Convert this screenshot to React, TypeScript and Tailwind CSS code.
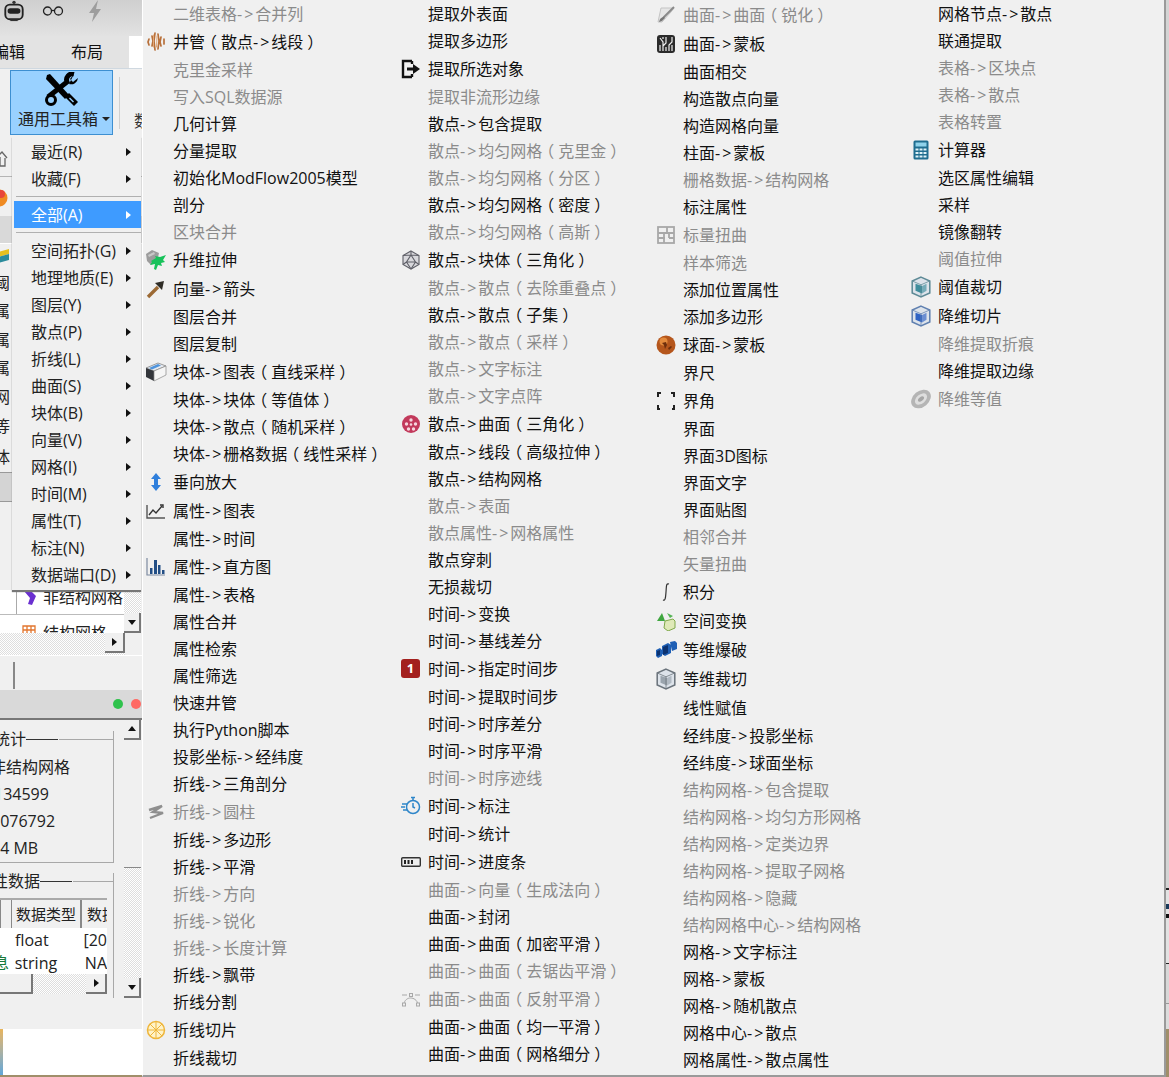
import React from 'react';

type Entry = { text: string; off?: boolean; tall?: boolean; icon?: React.ReactNode };

const FONT = "font-['Open_Sans','Noto_Sans_CJK_SC',sans-serif]";

// Menu icons
const WellIcon = () => (
  <svg width="20" height="22" viewBox="0 0 20 22" fill="none" strokeLinecap="round">
    <path d="M3 8l-1 3 1 3M6 5l1 5-1 5M9 2l-1 8 1 9M12 3l1 7-1 8M15 6l-1 5 1 4M18 8v5" stroke="#b8703a" strokeWidth="1.700" />
    <path d="M7.500 4v12M11 5l-.5 11" stroke="#e3a878" strokeWidth="1" />
  </svg>
);
const TreeIcon = () => (
  <svg width="22" height="22" viewBox="0 0 22 22">
    <path d="M1 5l6-4 7 3-2 9-6 3-4-4z" fill="#9c9c9c" />
    <path d="M3 6l6-3 1 2-6 3z" fill="#c8c8c8" />
    <path d="M6 12l5-3-1-2 5 1 6-2-3 5 2 2-4 1 1 3-4-1-2 5-2-1 1-5-5 1 2-3z" fill="#17c25a" />
  </svg>
);
const ArrowIcon = () => (
  <svg width="20" height="20" viewBox="0 0 20 20" fill="none">
    <path d="M2 18L12 8" stroke="#9c6a34" strokeWidth="3.400" />
    <path d="M9 4l9-2-2 9z" fill="#2f2c26" />
  </svg>
);
const BoxIcon = () => (
  <svg width="22" height="22" viewBox="0 0 22 22">
    <path d="M1 7l12-5 8 3-12 5z" fill="#e8ebf0" stroke="#777" strokeWidth=".7" />
    <path d="M4 7l9-4 3 1.500-9 4z" fill="#4f94dc" />
    <path d="M1 7l8 3v10l-8-4z" fill="#33363b" />
    <path d="M9 10l12-5v9l-12 6z" fill="#f5f5f5" stroke="#888" strokeWidth=".7" />
  </svg>
);
const UpDownIcon = () => (
  <svg width="14" height="20" viewBox="0 0 14 20" fill="#2f7fdc">
    <path d="M7 1l5 6H9v6h3l-5 6-5-6h3V7H2z" />
  </svg>
);
const LineChartIcon = () => (
  <svg width="20" height="18" viewBox="0 0 20 18" fill="none" stroke="#333" strokeWidth="1.400">
    <path d="M1 3v13h18" stroke="#555" />
    <path d="M3 13l4-5 3 3 6-7" />
    <path d="M14 3h3v3" />
  </svg>
);
const BarsIcon = () => (
  <svg width="20" height="20" viewBox="0 0 20 20">
    <path d="M1 1v17h18" fill="none" stroke="#7d8aa0" strokeWidth="1.200" />
    <path d="M4 11h2.500v6H4zM8 3h3v14H8zM12 8h2.500v9H12zM16 13h2.500v4H16z" fill="#234f86" />
  </svg>
);
const ZigzagIcon = () => (
  <svg width="20" height="18" viewBox="0 0 20 18" fill="none" stroke="#8f8f8f" strokeWidth="2.400">
    <path d="M3 7l13-4-9 6 10 1-13 5" />
  </svg>
);
const SliceIcon = () => (
  <svg width="20" height="20" viewBox="0 0 20 20" fill="#fff3c8" stroke="#eeb53a" strokeWidth="1.500">
    <circle cx="10" cy="10" r="8.500" />
    <path d="M10 2v16M2 10h16M4 4l12 12M16 4L4 16" strokeWidth="1" />
  </svg>
);
const ExitIcon = () => (
  <svg width="20" height="20" viewBox="0 0 20 20" fill="none" stroke="#111" strokeWidth="2.400">
    <path d="M11 2H2v16h9M11 2v3M11 15v3" />
    <path d="M6 10h7" strokeWidth="3" />
    <path d="M12 5l7 5-7 5z" fill="#111" strokeWidth="0" />
  </svg>
);
const HedronIcon = () => (
  <svg width="20" height="20" viewBox="0 0 20 20" fill="#d8d8dc" stroke="#5f6068" strokeWidth="1.100">
    <path d="M10 1l8 4.500v9L10 19l-8-4.500v-9z" />
    <path d="M10 5l4.500 7h-9zM10 1v4M2 5.500L10 5l8 .5M2 14.500l3.500-2.500M18 14.500L14.500 12M10 19l-4.500-7M10 19l4.500-7" fill="none" />
  </svg>
);
const BallIcon = () => (
  <svg width="20" height="20" viewBox="0 0 20 20" fill="none">
    <circle cx="10" cy="10" r="9" fill="#c2395b" />
    <g fill="#f6d6de">
      <circle cx="10" cy="6" r="1.700" />
      <circle cx="5.500" cy="10" r="1.700" />
      <circle cx="14.500" cy="10" r="1.700" />
      <circle cx="7.500" cy="15" r="1.700" />
      <circle cx="12.500" cy="15" r="1.700" />
      <circle cx="10" cy="10.500" r="1.300" />
    </g>
  </svg>
);
const StepIcon = () => (
  <span className="flex h-[19px] w-[19px] items-center justify-center rounded-[3px] bg-[#a3201e] text-[13px] font-bold leading-none text-white">1</span>
);
const TimerIcon = () => (
  <svg width="20" height="20" viewBox="0 0 20 20" fill="none" stroke="#2f86c9" strokeWidth="1.500">
    <circle cx="12" cy="11" r="6.500" />
    <path d="M12 1.500v3M10 1.500h4M12 7v4l2 1" />
    <path d="M1 8h5M0 11h4M2 14h4" />
  </svg>
);
const ProgressIcon = () => (
  <svg width="20" height="10" viewBox="0 0 20 10">
    <rect x=".7" y=".7" width="18.600" height="8.600" rx="1" fill="#eee" stroke="#333" strokeWidth="1.400" />
    <path d="M3 3h2v4H3zM6.500 3h2v4h-2zM10 3h2v4h-2z" fill="#222" />
  </svg>
);
const BezierIcon = () => (
  <svg width="20" height="16" viewBox="0 0 20 16" fill="none" stroke="#a8a8a8" strokeWidth="1">
    <path d="M3 13C4 5 15 5 17 13" />
    <path d="M1 4h5M14 4h5" />
    <rect x="8.500" y="2.500" width="3" height="3" fill="#eee" />
    <rect x="1.500" y="12" width="3" height="3" fill="#eee" />
    <rect x="15.500" y="12" width="3" height="3" fill="#eee" />
  </svg>
);
const BrushIcon = () => (
  <svg width="20" height="20" viewBox="0 0 20 20" fill="none">
    <path d="M5 3h13l-3 4-9 10H2z" fill="#e6e6e6" stroke="#c4c4c4" />
    <path d="M18 2L8 12" stroke="#8a8a8a" strokeWidth="2" />
    <path d="M8 11l-4 3-1 3 3-1 3-3z" fill="#777" />
  </svg>
);
const CircuitIcon = () => (
  <svg width="20" height="20" viewBox="0 0 20 20" fill="none">
    <rect x="1" y="1" width="18" height="18" rx="3" fill="#2b2b2b" />
    <path d="M4 4l3 4v9M10 3v6l-3 3M13 17v-6l3-3V3M10 13v4M4 11v6M16 11v6M7 3v2" stroke="#eee" strokeWidth="1.200" />
  </svg>
);
const GridIcon = () => (
  <svg width="20" height="20" viewBox="0 0 20 20" fill="none" stroke="#a8a8a8" strokeWidth="1.800">
    <rect x="2" y="2" width="16" height="16" />
    <path d="M2 8h16M2 13h7M11 2v6M8 8v10M13 13h5M13 8v5" />
  </svg>
);
const GlobeIcon = () => (
  <svg width="20" height="20" viewBox="0 0 20 20">
    <circle cx="10" cy="10" r="9.500" fill="#b5561c" />
    <circle cx="7.500" cy="6.500" r="4" fill="#e48a3c" />
    <path d="M6 8l4-1 1 3-2 4-1-4zM12 13l3-2 1 1-3 3z" fill="#6e2e0c" />
  </svg>
);
const CornersIcon = () => (
  <svg width="20" height="20" viewBox="0 0 20 20" fill="none" stroke="#222" strokeWidth="2">
    <path d="M2 6V2h3M15 2h3v4M2 14v4h2M18 14v4h-2" />
  </svg>
);
const IntegralIcon = () => (
  <svg width="12" height="20" viewBox="0 0 12 20" fill="none" stroke="#333" strokeWidth="1.200">
    <path d="M9 2C6 1 6.500 4 6 10c-.4 5-.5 9-3 8" />
  </svg>
);
const TransformIcon = () => (
  <svg width="20" height="20" viewBox="0 0 20 20">
    <path d="M1 10l5-8 3 8z" fill="#3fa63f" />
    <path d="M9 10l8-2 2 2v7l-7 3-4-3z" fill="#dfe9b8" stroke="#7fa84a" />
    <path d="M11 2l6 3-3 2z" fill="#55b455" />
  </svg>
);
const BurstIcon = () => (
  <svg width="22" height="20" viewBox="0 0 22 20" fill="#1f5fb4">
    <path d="M1 10l4-2 2 2v6l-4 2-2-2zM7 6l6-3 3 2v8l-6 3-3-2zM15 2l5-1 2 2v6l-5 2z" />
    <path d="M8 7l5-2v8l-5 2zM2 11l3-1v5l-3 1z" fill="#0c3270" />
  </svg>
);
const CubeIcon = ({ face, edge }: { face: string; edge: string }) => (
  <svg width="22" height="22" viewBox="0 0 20 20" fill="none">
    <path d="M10 1l8 3.500v11L10 19l-8-3.500v-11z" fill="#dde3ea" stroke={edge} strokeWidth="1.400" />
    <path d="M5 7l6 2v7l-6-2.500z" fill={face} />
    <path d="M11 9l4-2v6.500L11 16z" fill={face} opacity=".65" />
    <path d="M2 4.500L10 8l8-3.500M10 8v11" stroke={edge} strokeWidth=".7" />
  </svg>
);
const CalcIcon = () => (
  <svg width="16" height="20" viewBox="0 0 16 20">
    <rect x=".5" y=".5" width="15" height="19" rx="1.500" fill="#1f6d8f" />
    <rect x="2.500" y="2.500" width="11" height="4" fill="#8fd2ea" />
    <path d="M2.500 8.500h3v2h-3zM6.500 8.500h3v2h-3zM10.500 8.500h3v2h-3zM2.500 12h3v2h-3zM6.500 12h3v2h-3zM10.500 12h3v2h-3zM2.500 15.500h3v2h-3zM6.500 15.500h3v2h-3zM10.500 15.500h3v2h-3z" fill="#dff2f7" />
  </svg>
);
const DiscIcon = () => (
  <svg width="22" height="22" viewBox="0 0 22 20">
    <ellipse cx="11" cy="10" rx="11" ry="8" transform="rotate(-40 11 10)" fill="#b5b5b5" />
    <ellipse cx="11" cy="10" rx="7" ry="4.500" transform="rotate(-40 11 10)" fill="#dedede" />
    <ellipse cx="11" cy="10" rx="3.500" ry="2" transform="rotate(-40 11 10)" fill="#a6a6a6" />
  </svg>
);

const col1: Entry[] = [
  { text: '二维表格->合并列', off: true },
  { text: '井管（散点->线段）', icon: <WellIcon /> },
  { text: '克里金采样', off: true },
  { text: '写入SQL数据源', off: true },
  { text: '几何计算' },
  { text: '分量提取' },
  { text: '初始化ModFlow2005模型' },
  { text: '剖分' },
  { text: '区块合并', off: true },
  { text: '升维拉伸', icon: <TreeIcon /> },
  { text: '向量->箭头', icon: <ArrowIcon /> },
  { text: '图层合并' },
  { text: '图层复制' },
  { text: '块体->图表（直线采样）', icon: <BoxIcon /> },
  { text: '块体->块体（等值体）' },
  { text: '块体->散点（随机采样）' },
  { text: '块体->栅格数据（线性采样）' },
  { text: '垂向放大', icon: <UpDownIcon /> },
  { text: '属性->图表', icon: <LineChartIcon /> },
  { text: '属性->时间' },
  { text: '属性->直方图', icon: <BarsIcon /> },
  { text: '属性->表格' },
  { text: '属性合并' },
  { text: '属性检索' },
  { text: '属性筛选' },
  { text: '快速井管' },
  { text: '执行Python脚本' },
  { text: '投影坐标->经纬度' },
  { text: '折线->三角剖分' },
  { text: '折线->圆柱', off: true, icon: <ZigzagIcon /> },
  { text: '折线->多边形' },
  { text: '折线->平滑' },
  { text: '折线->方向', off: true },
  { text: '折线->锐化', off: true },
  { text: '折线->长度计算', off: true },
  { text: '折线->飘带' },
  { text: '折线分割' },
  { text: '折线切片', icon: <SliceIcon /> },
  { text: '折线裁切' },
];

const col2: Entry[] = [
  { text: '提取外表面' },
  { text: '提取多边形' },
  { text: '提取所选对象', icon: <ExitIcon /> },
  { text: '提取非流形边缘', off: true },
  { text: '散点->包含提取' },
  { text: '散点->均匀网格（克里金）', off: true },
  { text: '散点->均匀网格（分区）', off: true },
  { text: '散点->均匀网格（密度）' },
  { text: '散点->均匀网格（高斯）', off: true },
  { text: '散点->块体（三角化）', icon: <HedronIcon /> },
  { text: '散点->散点（去除重叠点）', off: true },
  { text: '散点->散点（子集）' },
  { text: '散点->散点（采样）', off: true },
  { text: '散点->文字标注', off: true },
  { text: '散点->文字点阵', off: true },
  { text: '散点->曲面（三角化）', icon: <BallIcon /> },
  { text: '散点->线段（高级拉伸）' },
  { text: '散点->结构网格' },
  { text: '散点->表面', off: true },
  { text: '散点属性->网格属性', off: true },
  { text: '散点穿刺' },
  { text: '无损裁切' },
  { text: '时间->变换' },
  { text: '时间->基线差分' },
  { text: '时间->指定时间步', icon: <StepIcon /> },
  { text: '时间->提取时间步' },
  { text: '时间->时序差分' },
  { text: '时间->时序平滑' },
  { text: '时间->时序迹线', off: true },
  { text: '时间->标注', icon: <TimerIcon /> },
  { text: '时间->统计' },
  { text: '时间->进度条', icon: <ProgressIcon /> },
  { text: '曲面->向量（生成法向）', off: true },
  { text: '曲面->封闭' },
  { text: '曲面->曲面（加密平滑）' },
  { text: '曲面->曲面（去锯齿平滑）', off: true },
  { text: '曲面->曲面（反射平滑）', off: true, icon: <BezierIcon /> },
  { text: '曲面->曲面（均一平滑）' },
  { text: '曲面->曲面（网格细分）' },
];

const col3: Entry[] = [
  { text: '曲面->曲面（锐化）', off: true, icon: <BrushIcon /> },
  { text: '曲面->蒙板', icon: <CircuitIcon /> },
  { text: '曲面相交' },
  { text: '构造散点向量' },
  { text: '构造网格向量' },
  { text: '柱面->蒙板' },
  { text: '栅格数据->结构网格', off: true },
  { text: '标注属性' },
  { text: '标量扭曲', off: true, icon: <GridIcon /> },
  { text: '样本筛选', off: true },
  { text: '添加位置属性' },
  { text: '添加多边形' },
  { text: '球面->蒙板', icon: <GlobeIcon /> },
  { text: '界尺' },
  { text: '界角', icon: <CornersIcon /> },
  { text: '界面' },
  { text: '界面3D图标' },
  { text: '界面文字' },
  { text: '界面贴图' },
  { text: '相邻合并', off: true },
  { text: '矢量扭曲', off: true },
  { text: '积分', icon: <IntegralIcon /> },
  { text: '空间变换', icon: <TransformIcon /> },
  { text: '等维爆破', icon: <BurstIcon /> },
  { text: '等维裁切', icon: <CubeIcon face="#9aa4ad" edge="#6b747c" /> },
  { text: '线性赋值', tall: true },
  { text: '经纬度->投影坐标' },
  { text: '经纬度->球面坐标' },
  { text: '结构网格->包含提取', off: true },
  { text: '结构网格->均匀方形网格', off: true },
  { text: '结构网格->定类边界', off: true },
  { text: '结构网格->提取子网格', off: true },
  { text: '结构网格->隐藏', off: true },
  { text: '结构网格中心->结构网格', off: true },
  { text: '网格->文字标注' },
  { text: '网格->蒙板' },
  { text: '网格->随机散点' },
  { text: '网格中心->散点' },
  { text: '网格属性->散点属性' },
];

const col4: Entry[] = [
  { text: '网格节点->散点' },
  { text: '联通提取' },
  { text: '表格->区块点', off: true },
  { text: '表格->散点', off: true },
  { text: '表格转置', off: true },
  { text: '计算器', icon: <CalcIcon /> },
  { text: '选区属性编辑' },
  { text: '采样' },
  { text: '镜像翻转' },
  { text: '阈值拉伸', off: true },
  { text: '阈值裁切', icon: <CubeIcon face="#3f8d9c" edge="#5e8a96" /> },
  { text: '降维切片', icon: <CubeIcon face="#2f63c4" edge="#6080b0" /> },
  { text: '降维提取折痕', off: true },
  { text: '降维提取边缘' },
  { text: '降维等值', off: true, icon: <DiscIcon /> },
];

const sideItems = ['空间拓扑(G)', '地理地质(E)', '图层(Y)', '散点(P)', '折线(L)', '曲面(S)', '块体(B)', '向量(V)', '网格(I)', '时间(M)', '属性(T)', '标注(N)', '数据端口(D)'];

const Tri = ({ dir, color = '#111', size = 8 }: { dir: 'right' | 'up' | 'down'; color?: string; size?: number }) => {
  const d = dir === 'right' ? 'M2 0l5 4-5 4z' : dir === 'up' ? 'M0 6l4-5 4 5z' : 'M0 2l4 5 4-5z';
  return (
    <svg width={size} height={size} viewBox="0 0 8 8" fill={color}>
      <path d={d} />
    </svg>
  );
};

// Arrows get extra tracking, full-width brackets go half width and are padded so they sit centred
const MenuLabel = ({ text }: { text: string }) => (
  <span className="whitespace-nowrap">
    {text.split(/(->|（|）)/).map((part, i) => {
      if (part === '->') return <span key={i} className="tracking-[2px]">-&gt;</span>;
      if (part === '（' || part === '）') return <span key={i} className="px-[4px] [font-feature-settings:'halt']">{part}</span>;
      return part;
    })}
  </span>
);

const MenuColumn = ({ items }: { items: Entry[] }) => (
  <div className="flex w-[255px] flex-col">
    {items.map((item) => (
      <div key={item.text} className={`flex items-center ${item.icon || item.tall ? 'h-[29px]' : 'h-[27px]'} ${item.off ? 'text-[#8b8b8b]' : 'text-[#111]'}`}>
        <span className="flex w-[25px] justify-center">{item.icon}</span>
        <span className="ml-[5px]">
          <MenuLabel text={item.text} />
        </span>
      </div>
    ))}
  </div>
);

const SideRow = ({ label }: { label: string }) => (
  <div className="flex h-[27px] items-center justify-between pl-[19px] pr-[9px]">
    <span className="whitespace-nowrap">{label}</span>
    <Tri dir="right" />
  </div>
);

const SideMenu = () => (
  <div className="absolute left-[12px] top-[136px] h-[454px] w-[129px] bg-[#f0f0f0] pt-[2.5px] text-[16px] leading-none text-[#222] shadow-[0_2px_1px_#777]">
    {['最近(R)', '收藏(F)'].map((t) => (
      <SideRow key={t} label={t} />
    ))}
    <div className="flex h-[8.5px] items-center pl-[4px]">
      <div className="h-px flex-1 bg-[#b0b0b0]" />
    </div>
    <div className="ml-[2px] flex h-[27px] items-center justify-between bg-[#3e9bff] pl-[17px] pr-[9px] text-white">
      <span>全部(A)</span>
      <Tri dir="right" color="#fff" />
    </div>
    <div className="flex h-[9px] items-center pl-[4px]">
      <div className="h-px flex-1 bg-[#b0b0b0]" />
    </div>
    {sideItems.map((t) => (
      <SideRow key={t} label={t} />
    ))}
  </div>
);

const Raised = ({ className, children }: { className: string; children?: React.ReactNode }) => (
  <div className={`flex items-center justify-center border-b-2 border-r-2 border-b-[#777] border-r-[#777] bg-[#f0f0f0] ${className}`}>{children}</div>
);

const hatch = 'bg-[repeating-conic-gradient(#dedede_0_25%,#ffffff_0_50%)] bg-[length:2px_2px]';

const TopBar = () => (
  <div className="flex h-[36px] items-center gap-[17px] bg-gradient-to-b from-[#cfcfcf] to-[#e2e2e2] pb-[14px] pl-[3px]">
    <svg width="22" height="22" viewBox="0 0 22 24">
      <circle cx="11" cy="2.500" r="1.800" fill="#333" />
      <rect x="1.500" y="5" width="19" height="16" rx="5" fill="#c9c9c9" stroke="#222" strokeWidth="2" />
      <rect x="4" y="9" width="14" height="6" rx="3" fill="#222" />
      <rect x="7" y="21" width="8" height="2" fill="#333" />
    </svg>
    <svg width="22" height="10" viewBox="0 0 22 10" fill="none" stroke="#222" strokeWidth="1.300">
      <circle cx="5.500" cy="5" r="4" />
      <circle cx="16.500" cy="5" r="4" />
      <path d="M9.500 4.500h3" />
    </svg>
    <svg width="14" height="22" viewBox="0 0 14 22" fill="#9d9d9d" className="ml-[7px]">
      <path d="M10 0L1 13h5l-2 9 9-13H8z" />
    </svg>
  </div>
);

const Tabs = () => (
  <div className="flex h-[32px] items-center justify-between bg-[#e3e3e3] text-[16px] text-[#111]">
    <span className="-ml-[7px]">编辑</span>
    <span className="ml-[46px]">布局</span>
    <div className="ml-auto h-full w-[13px] bg-white" />
  </div>
);

const Toolbar = () => (
  <div className="flex h-[68px] items-center overflow-hidden border-t border-t-[#cfd8e0] bg-[#f0f0f0] pl-[3px]">
    <div className="h-[52px] w-px bg-[#d0d0d0]" />
    <div className="ml-[7px] flex h-[65px] w-[103px] shrink-0 flex-col items-center border border-[#3d8fd1] bg-[#99d1ff]">
      <svg width="36" height="36" viewBox="0 0 36 36" fill="none" className="mt-[1px]">
        <path d="M3 3l3-1 19 21-4 4L2 7z" fill="#000" />
        <path d="M30 2a6 6 0 0 0-7 8L4 25" stroke="#000" strokeWidth="5" />
        <path d="M30 2l-4 5 3 3 5-4a7 7 0 0 1-9 6" fill="#000" />
        <circle cx="7" cy="28" r="4.500" stroke="#000" strokeWidth="3" fill="#99d1ff" />
        <path d="M21 25l4-4 9 9-4 4z" fill="#000" />
        <path d="M25.500 26l4 4" stroke="#99d1ff" strokeWidth="1.500" />
      </svg>
      <div className="ml-[5px] mt-[3px] flex items-center gap-[4px] text-[16px] leading-none text-[#222]">
        <span className="whitespace-nowrap">通用工具箱</span>
        <svg width="8" height="5" viewBox="0 0 8 5" fill="#222"><path d="M0 0h8L4 4z" /></svg>
      </div>
    </div>
    <div className="ml-[6px] h-[52px] w-px shrink-0 bg-[#d0d0d0]" />
    <span className="ml-[14px] mt-[36px] shrink-0 text-[16px] leading-none text-[#333]">数</span>
  </div>
);

// Peeks out to the left of the open side menu
const ListBehind = () => (
  <div className="flex h-[454px] flex-col bg-[#f0f0f0] text-[16px] leading-none text-[#222]">
    <div className="flex h-[40px] items-start overflow-hidden pt-[14px]">
      <svg width="8" height="18" viewBox="0 0 8 18" fill="none" stroke="#666" strokeWidth="1.300"><path d="M-3 7l5-5 5 6M0 7v9h5V8" /></svg>
    </div>
    <div className="flex h-[40px] items-start overflow-hidden border-t border-t-[#b5b5b5] pt-[11px]">
      <svg width="8" height="20" viewBox="0 0 8 20"><circle cx="-1" cy="10" r="8.500" fill="#ef8a22" /><circle cx="1" cy="6" r="4" fill="#e8453a" /></svg>
    </div>
    <div className="h-[27px] bg-[#d9d9d9]" />
    <div className="flex h-[25px] items-center overflow-hidden border-t border-t-white">
      <svg width="10" height="16" viewBox="0 0 10 16"><path d="M-2 4l11-3v5L-2 9z" fill="#e6c020" /><path d="M-2 9l11-3v6L-2 15z" fill="#2c8c9c" /></svg>
    </div>
    {[
      ['阈', 29],
      ['属', 28],
      ['属', 29],
      ['属', 28],
      ['网', 29],
      ['等', 30],
      ['体', 31],
    ].map(([t, h], i) => (
      <div key={i} className="flex items-center overflow-hidden" style={{ height: h as number }}>
        <span className="-ml-[6px]">{t}</span>
      </div>
    ))}
    <div className="h-[30px] w-[12px] border-b border-t border-[#999] bg-[#d4d4d4]" />
  </div>
);

const TreeList = () => (
  <div className="flex h-[43px] text-[16px] leading-none text-[#222]">
    <div className="flex w-[124px] flex-col overflow-hidden bg-white">
      <div className="flex h-[25px] items-start border-b border-b-[#bbb]">
        <div className="h-full w-[17px] border-r border-r-[#aaa]" />
        <svg width="14" height="16" viewBox="0 0 14 16" className="ml-[6px]"><path d="M1 1h7l5 5-4 9-4-1 2-6z" fill="#6a2fd0" /></svg>
        <span className="-mt-[1px] ml-[6px] whitespace-nowrap">非结构网格</span>
      </div>
      <div className="flex h-[18px] items-start overflow-hidden pt-[10px]">
        <svg width="14" height="14" viewBox="0 0 14 14" fill="none" stroke="#e2762e" strokeWidth="1.300" className="ml-[22px] shrink-0"><path d="M1 1h12v12H1zM1 5h12M1 9h12M5 1v12M9 1v12" /></svg>
        <span className="ml-[7px] whitespace-nowrap">结构网格</span>
      </div>
    </div>
    <div className={`flex w-[17px] flex-col justify-end ${hatch}`}>
      <Raised className="h-[20px]"><Tri dir="down" /></Raised>
    </div>
  </div>
);

const HScroll = () => (
  <div className="flex h-[22px]">
    <div className={`flex flex-1 justify-end ${hatch}`}>
      <Raised className="h-[20px] w-[20px]"><Tri dir="right" /></Raised>
    </div>
    <div className="w-[17px] bg-[#f0f0f0]" />
  </div>
);

const StatsPanel = () => (
  <div className="flex h-[280px] bg-[#f0f0f0] text-[16px] leading-none text-[#222]">
    <div className="w-[124px] overflow-hidden pt-[11px]">
      <div className="h-[132px] w-[114px] border-b border-r border-[#a8a8a8]">
        <div className="flex h-[16px] items-center">
          <span className="-ml-[6px]">统计</span>
          <div className="h-px w-[32px] bg-[#333]" />
          <div className="ml-[1px] h-px flex-1 bg-[#a8a8a8]" />
        </div>
        {['非结构网格', '134599', '2076792', '14 MB'].map((t, i) => (
          <div key={t} className={`flex h-[27px] items-center whitespace-nowrap ${['-ml-[10px]', '-ml-[6px]', '-ml-[9px]', '-ml-[9px]'][i]} ${i === 0 ? 'mt-[6px]' : ''}`}>{t}</div>
        ))}
      </div>
      <div className="mt-[10px] h-[125px] w-[114px] border-r border-r-[#a8a8a8]">
        <div className="flex h-[16px] items-center">
          <span className="-ml-[8px] whitespace-nowrap">性数据</span>
          <div className="h-px w-[32px] bg-[#333]" />
          <div className="ml-[1px] h-px flex-1 bg-[#a8a8a8]" />
        </div>
        <div className="mt-[9px] w-[107px] overflow-hidden bg-white">
          <div className="flex h-[30px] items-center border-t-2 border-t-[#aaa] bg-[#f0f0f0]">
            <div className="h-full w-[12px] shrink-0 border-x border-x-[#888]" />
            <div className="flex h-full w-[70px] shrink-0 items-center justify-center border-r-2 border-r-[#888] text-[15px]">数据类型</div>
            <span className="ml-[5px] whitespace-nowrap text-[15px]">数据</span>
          </div>
          <div className="flex h-[23px] items-center whitespace-nowrap pl-[15px]">
            <span className="w-[71px]">float</span><span>[20</span>
          </div>
          <div className="flex h-[23px] items-center whitespace-nowrap">
            <span className="-ml-[7px] w-[22px] text-[#1a7a3a]">息</span>
            <span className="w-[71px]">string</span><span>NA</span>
          </div>
          <div className={`flex h-[20px] justify-between ${hatch}`}>
            <Raised className="w-[33px]" />
            <Raised className="w-[21px]"><Tri dir="right" /></Raised>
          </div>
        </div>
      </div>
    </div>
    <div className="flex h-[278px] w-[17px] flex-col">
      <Raised className="h-[20px] shrink-0"><Tri dir="up" /></Raised>
      <div className="h-[128px] border-b border-b-[#888]" />
      <div className={`flex-1 ${hatch}`} />
      <Raised className="h-[20px] shrink-0"><Tri dir="down" /></Raised>
    </div>
  </div>
);

const LeftPane = () => (
  <div className="flex w-[142px] shrink-0 flex-col">
    <TopBar />
    <Tabs />
    <Toolbar />
    <ListBehind />
    <TreeList />
    <HScroll />
    <div className="h-[35px] border-t border-t-white bg-[#f0f0f0] pt-[6px]">
      <div className="h-[27px] w-[15px] border-r-2 border-r-[#888]" />
    </div>
    <div className="flex h-[30px] items-center justify-end gap-[8px] border-b-2 border-b-[#777] bg-[#d9d9d9]">
      <span className="h-[10px] w-[10px] rounded-full bg-[#2fc24c]" />
      <span className="mr-[1px] h-[10px] w-[10px] rounded-full bg-[#ff6a64]" />
    </div>
    <StatsPanel />
    <div className="h-[29px] bg-[#f0f0f0]" />
    <div className="flex h-[46px] bg-white">
      <div className="w-[3px] bg-gradient-to-b from-[#e8b45a] to-[#5fa6d8]" />
    </div>
    <div className="h-[2px] bg-[#a08f6a]" />
  </div>
);

const RightEdge = () => (
  <div className="flex w-[3px] shrink-0 flex-col">
    <div className="h-[888px] bg-[#d4d4d4]" />
    <div className="h-[2px] bg-[#222]" />
    <div className="h-[14px] bg-[#e2e2e2]" />
    <div className="h-[5px] bg-[#1a3a5a]" />
    <div className="h-[5px] bg-[#e2e2e2]" />
    <div className="h-[4px] bg-[#111]" />
    <div className="h-[45px] bg-[#e2e2e2]" />
    <div className="h-px bg-[#222]" />
    <div className="h-[39px] bg-[#d8d8d8]" />
    <div className="h-px bg-[#999]" />
    <div className="h-[25px] bg-[#dcdcdc]" />
    <div className="flex-1 bg-[#a08f6a]" />
  </div>
);

export default function App() {
  return (
    <div className={`relative flex h-[1077px] w-[1169px] overflow-hidden bg-[#f0f0f0] text-[16px] ${FONT}`}>
      <LeftPane />
      <div className="h-[1077px] flex-1 overflow-hidden border-b-2 border-l border-r-2 border-b-[#9a9a9a] border-l-white border-r-[#9a9a9a] bg-[#f0f0f0] leading-none">
        <div className="flex">
          <MenuColumn items={col1} />
          <MenuColumn items={col2} />
          <MenuColumn items={col3} />
          <MenuColumn items={col4} />
        </div>
      </div>
      <RightEdge />
      <SideMenu />
    </div>
  );
}
